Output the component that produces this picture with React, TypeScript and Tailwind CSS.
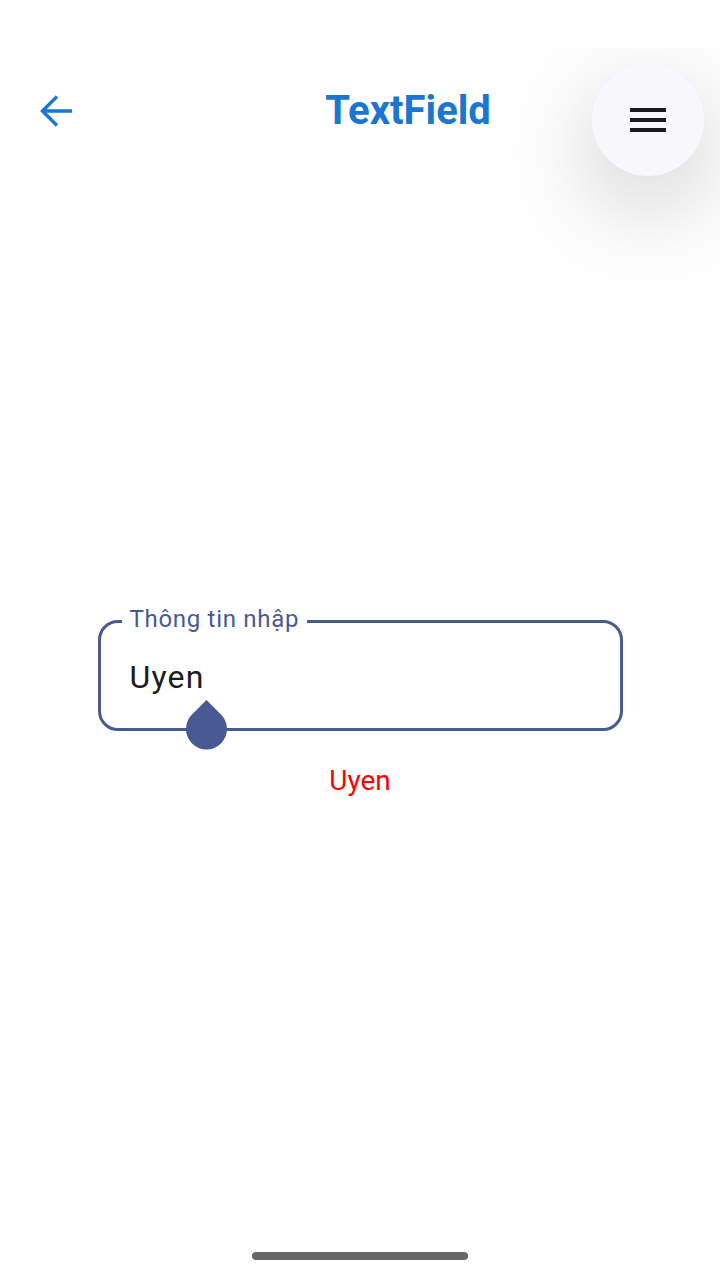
import React from "react";

const font = { fontFamily: "Roboto, 'Noto Sans', sans-serif" };

function BackArrow() {
  return (
    <svg width="32" height="32" viewBox="0 0 32 32" fill="none" aria-hidden="true">
      <path d="M32 16H3M17 1.5L2.5 16L17 30.5" stroke="#1976d2" strokeWidth="3.4" />
    </svg>
  );
}

function MenuIcon() {
  return (
    <svg width="48" height="48" viewBox="0 0 24 24" fill="#1c1b1f" aria-hidden="true">
      <path d="M3 18h18v-2H3v2zm0-5h18v-2H3v2zm0-7v2h18V6H3z" />
    </svg>
  );
}

function Drop() {
  return (
    <svg width="41" height="50" viewBox="0 0 41 50" aria-hidden="true">
      <path d="M20.5 0L35 14.5A20.5 20.5 0 1 1 6 14.5Z" fill="#485a92" />
    </svg>
  );
}

export default function App() {
  return (
    <div className="relative flex h-[1280px] w-[720px] flex-col overflow-hidden bg-white" style={font}>
      {/* status bar area sits above the menu button's shadow */}
      <div className="absolute inset-x-0 top-0 z-10 h-[48px] bg-white" />

      <header className="mt-[87px] flex h-[47px] items-center">
        <div className="flex w-[96px] pl-[40px]">
          <BackArrow />
        </div>
        <h1 className="flex-1 text-center text-[40px] font-bold leading-[47px] text-[#1976d2]">TextField</h1>
      </header>

      <button className="absolute right-[16px] top-[64px] flex h-[112px] w-[112px] items-center justify-center rounded-full bg-[#f7f7fc] shadow-[0_30px_100px_rgba(0,0,0,0.22)]">
        <MenuIcon />
      </button>

      <div className="mx-auto mt-[486px] w-[525px]">
        <div className="relative h-[111px] rounded-[20px] border-[3px] border-[#485a92] pl-[29px] pt-[35px]">
          <span className="absolute left-[21px] top-[-18px] bg-white px-[8px] text-[24px] leading-[28px] tracking-[0.7px] text-[#485a92]">
            Thông tin nhập
          </span>
          <div className="text-[32px] leading-[38px] tracking-[1.2px] text-[#1c1b1f]">Uyen</div>
          <div className="absolute left-[85px] top-[77px]">
            <Drop />
          </div>
        </div>
      </div>

      <p className="mt-[33px] text-center text-[28px] leading-[33px] text-[#ff0000]">Uyen</p>

      <div className="mx-auto mb-[20px] mt-auto h-[8px] w-[216px] rounded-full bg-[#666666]" />
    </div>
  );
}
